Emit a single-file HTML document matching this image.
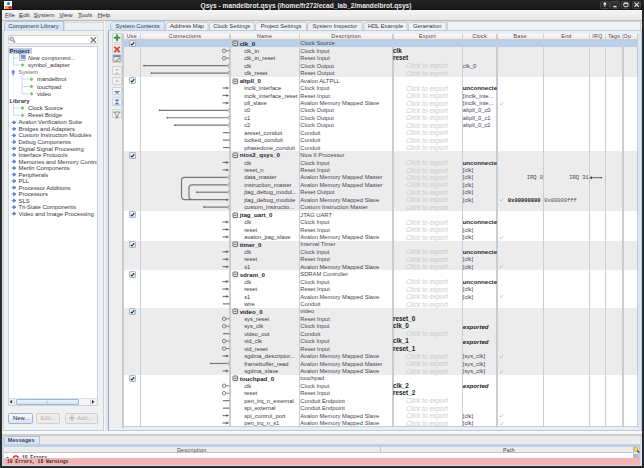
<!DOCTYPE html><html><head><meta charset="utf-8"><style>
*{margin:0;padding:0;box-sizing:border-box}
html,body{width:644px;height:468px;overflow:hidden;background:#2a2a2a}
body{position:relative;font-family:"Liberation Sans",sans-serif;font-size:5.8px;color:#3c3444;line-height:1}
.a{position:absolute}
.t{position:absolute;white-space:nowrap;line-height:1}
.b{font-weight:bold}
.i{font-style:italic}
.m{font-family:"Liberation Mono",monospace;font-size:5.45px}
</style></head><body>
<div class="a" style="left:0;top:0;width:644px;height:9.8px;background:linear-gradient(#242424,#161616)"></div>
<div class="a" style="left:4px;top:1px;width:8px;height:8px;background:#f4f4f4"></div>
<div class="a" style="left:6.5px;top:1.5px;width:3px;height:3px;border-radius:50%;background:#1e6fd0"></div>
<div class="a" style="left:4.5px;top:5.5px;width:3.5px;height:3px;background:#f0a040"></div>
<div class="a" style="left:8px;top:5.5px;width:3.5px;height:3px;border-radius:50%;background:#e02020"></div>
<div class="t b" style="left:200.5px;top:2.6px;font-size:6.63px;color:#e8e8e8">Qsys - mandelbrot.qsys (/home/fr272/ecad_lab_2/mandelbrot.qsys)</div>
<div class="a" style="left:600.2px;top:0.6px;width:9.6px;height:8.4px;background:linear-gradient(#363636,#242424);border:0.6px solid #404040;border-radius:1.5px"></div>
<div class="a" style="left:610.4px;top:0.6px;width:9.6px;height:8.4px;background:linear-gradient(#363636,#242424);border:0.6px solid #404040;border-radius:1.5px"></div>
<div class="a" style="left:620.8px;top:0.6px;width:9.6px;height:8.4px;background:linear-gradient(#363636,#242424);border:0.6px solid #404040;border-radius:1.5px"></div>
<div class="a" style="left:631.5px;top:0.6px;width:9.6px;height:8.4px;background:linear-gradient(#363636,#242424);border:0.6px solid #404040;border-radius:1.5px"></div>
<svg class="a" style="left:0;top:0" width="644" height="10"><g stroke="#e8e8e8" fill="#e8e8e8"><circle cx="604.8" cy="3.8" r="1.35" stroke="none"/><path d="M604.8 4.5 V7" stroke-width="0.8"/><rect x="613.2" y="5.9" width="3.4" height="1.4" stroke="none"/><rect x="623.8" y="2.9" width="4.2" height="3.8" rx="1" fill="none" stroke-width="0.95"/><path d="M624 3.6 H627.8" stroke-width="0.9"/><path d="M634.5 2.7 L638.9 6.9 M638.9 2.7 L634.5 6.9" stroke-width="1.15"/></g></svg>
<div class="a" style="left:2px;top:9.8px;width:640px;height:455.2px;background:#e6e6e6"></div>
<div class="a" style="left:2px;top:9.8px;width:640px;height:10.8px;background:linear-gradient(#f6f6f6,#e6e6e6);border-bottom:1.2px solid #b8bcc2"></div>
<div class="t" style="left:5px;top:12.1px;font-size:6.2px;color:#3a3040"><span style="text-decoration:underline;text-decoration-color:#9a9aa0;text-decoration-thickness:0.45px;text-underline-offset:0.2px">F</span>ile</div>
<div class="t" style="left:19px;top:12.1px;font-size:6.2px;color:#3a3040"><span style="text-decoration:underline;text-decoration-color:#9a9aa0;text-decoration-thickness:0.45px;text-underline-offset:0.2px">E</span>dit</div>
<div class="t" style="left:33.7px;top:12.1px;font-size:6.2px;color:#3a3040"><span style="text-decoration:underline;text-decoration-color:#9a9aa0;text-decoration-thickness:0.45px;text-underline-offset:0.2px">S</span>ystem</div>
<div class="t" style="left:59.2px;top:12.1px;font-size:6.2px;color:#3a3040"><span style="text-decoration:underline;text-decoration-color:#9a9aa0;text-decoration-thickness:0.45px;text-underline-offset:0.2px">V</span>iew</div>
<div class="t" style="left:78px;top:12.1px;font-size:6.2px;color:#3a3040"><span style="text-decoration:underline;text-decoration-color:#9a9aa0;text-decoration-thickness:0.45px;text-underline-offset:0.2px">T</span>ools</div>
<div class="t" style="left:97.5px;top:12.1px;font-size:6.2px;color:#3a3040"><span style="text-decoration:underline;text-decoration-color:#9a9aa0;text-decoration-thickness:0.45px;text-underline-offset:0.2px">H</span>elp</div>
<div class="a" style="left:2px;top:20.5px;width:102px;height:409.5px;background:#e8e8e8"></div>
<div class="a" style="left:63.5px;top:21.5px;width:40px;height:9px;background:#efefef;border:1px solid #d8d8d8;border-bottom:none"></div>
<div class="a" style="left:3px;top:30.3px;width:100.5px;height:400.4px;background:#f0f0f0;border:1px solid #bcd0e6;border-right:1.6px solid #bcd2ec;border-bottom:1.9px solid #b8cce6"></div>
<div class="a" style="left:3.5px;top:21.3px;width:60px;height:9.5px;background:linear-gradient(#e4eefa,#d2e0f2);border:1px solid #b0c6e0;border-bottom:none;border-top-left-radius:3px"></div>
<div class="t" style="left:8.2px;top:23.6px;font-size:5.94px;color:#3a3848">Component Library</div>
<div class="a" style="left:7.5px;top:35.3px;width:90px;height:9.2px;background:#fff;border:1px solid #d4d4d4;border-radius:1px"></div>
<svg class="a" style="left:7px;top:35px" width="92" height="10"><circle cx="4.6" cy="4" r="2" fill="#bcd6f4" stroke="#6f9bd0" stroke-width="0.8"/><line x1="6" y1="5.5" x2="8" y2="7.5" stroke="#d08030" stroke-width="1.4"/><line x1="83.8" y1="2.4" x2="88.8" y2="7.6" stroke="#606060" stroke-width="1.05"/><line x1="88.8" y1="2.4" x2="83.8" y2="7.6" stroke="#606060" stroke-width="1.05"/></svg>
<div class="a" style="left:7.5px;top:46.2px;width:90px;height:359.3px;background:#fff;border:1px solid #c8d4e0"></div>
<div class="a" style="left:8.8px;top:47.6px;width:22.9px;height:6px;background:#bcd0ea"></div>
<svg class="a" style="left:0;top:0" width="104" height="230"><g stroke="#b8cce6" stroke-width="0.7" fill="none"><path d="M13.5 54 V65 M13.5 57.8 H18 M13.5 65 H20"/><path d="M22 75 V93.8 M22 79.2 H29 M22 86.5 H29 M22 93.8 H29"/><path d="M13.5 104 V115.3 M13.5 108 H20 M13.5 115.3 H20"/></g><rect x="19.3" y="54.9" width="6" height="5.6" fill="#e8e8e8" stroke="#a0a0a0" stroke-width="0.6"/><rect x="21" y="54.9" width="4.3" height="4" fill="#6a98e0"/><rect x="21.1" y="63.6" width="2.8" height="2.8" rx="0.6" fill="#70c870" transform="rotate(45 22.5 65.0)"/><ellipse cx="13.2" cy="72.0" rx="1.7" ry="2.1" fill="#6a90d0"/><rect x="12.6" y="73.60000000000001" width="1.2" height="2" fill="#6a90d0"/><rect x="30.1" y="77.8" width="2.8" height="2.8" rx="0.6" fill="#70c870" transform="rotate(45 31.5 79.2)"/><rect x="30.1" y="85.1" width="2.8" height="2.8" rx="0.6" fill="#70c870" transform="rotate(45 31.5 86.5)"/><rect x="30.1" y="92.39999999999999" width="2.8" height="2.8" rx="0.6" fill="#70c870" transform="rotate(45 31.5 93.8)"/><rect x="21.1" y="106.6" width="2.8" height="2.8" rx="0.6" fill="#70c870" transform="rotate(45 22.5 108.0)"/><rect x="21.1" y="113.89999999999999" width="2.8" height="2.8" rx="0.6" fill="#70c870" transform="rotate(45 22.5 115.3)"/><path d="M11.5 122.4 h2.5 M13.5 120.80000000000001 l2.5 1.6 l-2.5 1.6z" stroke="#5b86c8" stroke-width="0.9" fill="#5b86c8"/><path d="M11.5 128.92000000000002 h2.5 M13.5 127.32000000000002 l2.5 1.6 l-2.5 1.6z" stroke="#5b86c8" stroke-width="0.9" fill="#5b86c8"/><path d="M11.5 135.44 h2.5 M13.5 133.84 l2.5 1.6 l-2.5 1.6z" stroke="#5b86c8" stroke-width="0.9" fill="#5b86c8"/><path d="M11.5 141.96 h2.5 M13.5 140.36 l2.5 1.6 l-2.5 1.6z" stroke="#5b86c8" stroke-width="0.9" fill="#5b86c8"/><path d="M11.5 148.48000000000002 h2.5 M13.5 146.88000000000002 l2.5 1.6 l-2.5 1.6z" stroke="#5b86c8" stroke-width="0.9" fill="#5b86c8"/><path d="M11.5 155.0 h2.5 M13.5 153.4 l2.5 1.6 l-2.5 1.6z" stroke="#5b86c8" stroke-width="0.9" fill="#5b86c8"/><path d="M11.5 161.52 h2.5 M13.5 159.92000000000002 l2.5 1.6 l-2.5 1.6z" stroke="#5b86c8" stroke-width="0.9" fill="#5b86c8"/><path d="M11.5 168.04000000000002 h2.5 M13.5 166.44000000000003 l2.5 1.6 l-2.5 1.6z" stroke="#5b86c8" stroke-width="0.9" fill="#5b86c8"/><path d="M11.5 174.56 h2.5 M13.5 172.96 l2.5 1.6 l-2.5 1.6z" stroke="#5b86c8" stroke-width="0.9" fill="#5b86c8"/><path d="M11.5 181.07999999999998 h2.5 M13.5 179.48 l2.5 1.6 l-2.5 1.6z" stroke="#5b86c8" stroke-width="0.9" fill="#5b86c8"/><path d="M11.5 187.6 h2.5 M13.5 186.0 l2.5 1.6 l-2.5 1.6z" stroke="#5b86c8" stroke-width="0.9" fill="#5b86c8"/><path d="M11.5 194.12 h2.5 M13.5 192.52 l2.5 1.6 l-2.5 1.6z" stroke="#5b86c8" stroke-width="0.9" fill="#5b86c8"/><path d="M11.5 200.64 h2.5 M13.5 199.04 l2.5 1.6 l-2.5 1.6z" stroke="#5b86c8" stroke-width="0.9" fill="#5b86c8"/><path d="M11.5 207.16 h2.5 M13.5 205.56 l2.5 1.6 l-2.5 1.6z" stroke="#5b86c8" stroke-width="0.9" fill="#5b86c8"/><path d="M11.5 213.68 h2.5 M13.5 212.08 l2.5 1.6 l-2.5 1.6z" stroke="#5b86c8" stroke-width="0.9" fill="#5b86c8"/></svg>
<div class="a" style="left:0;top:0;width:96.5px;height:400px;overflow:hidden">
<div class="t b" style="left:9.5px;top:48.75px;color:#2a2a44;font-size:5.9px">Project</div>
<div class="t i" style="left:28px;top:55.849999999999994px;color:#3a3a44;font-size:5.9px">New component...</div>
<div class="t " style="left:28px;top:63.05px;color:#3a3040;font-size:5.9px">symbol_adapter</div>
<div class="t " style="left:18.5px;top:70.45px;color:#707070;font-size:5.9px">System</div>
<div class="t " style="left:37px;top:77.25px;color:#3a3040;font-size:5.9px">mandelbrot</div>
<div class="t " style="left:37px;top:84.55px;color:#3a3040;font-size:5.9px">touchpad</div>
<div class="t " style="left:37px;top:91.85px;color:#3a3040;font-size:5.9px">video</div>
<div class="t b" style="left:9.5px;top:98.85px;color:#3a3040;font-size:5.9px">Library</div>
<div class="t " style="left:28px;top:106.05px;color:#3a3040;font-size:5.9px">Clock Source</div>
<div class="t " style="left:28px;top:113.35px;color:#3a3040;font-size:5.9px">Reset Bridge</div>
<div class="t " style="left:18.5px;top:120.45px;color:#3a3444;font-size:5.9px">Avalon Verification Suite</div>
<div class="t " style="left:18.5px;top:126.97000000000001px;color:#3a3444;font-size:5.9px">Bridges and Adapters</div>
<div class="t " style="left:18.5px;top:133.49px;color:#3a3444;font-size:5.9px">Custom Instruction Modules</div>
<div class="t " style="left:18.5px;top:140.01000000000002px;color:#3a3444;font-size:5.9px">Debug Components</div>
<div class="t " style="left:18.5px;top:146.53000000000003px;color:#3a3444;font-size:5.9px">Digital Signal Processing</div>
<div class="t " style="left:18.5px;top:153.05px;color:#3a3444;font-size:5.9px">Interface Protocols</div>
<div class="t " style="left:18.5px;top:159.57000000000002px;color:#3a3444;font-size:5.9px">Memories and Memory Controllers</div>
<div class="t " style="left:18.5px;top:166.09000000000003px;color:#3a3444;font-size:5.9px">Merlin Components</div>
<div class="t " style="left:18.5px;top:172.61px;color:#3a3444;font-size:5.9px">Peripherals</div>
<div class="t " style="left:18.5px;top:179.13px;color:#3a3444;font-size:5.9px">PLL</div>
<div class="t " style="left:18.5px;top:185.65px;color:#3a3444;font-size:5.9px">Processor Additions</div>
<div class="t " style="left:18.5px;top:192.17000000000002px;color:#3a3444;font-size:5.9px">Processors</div>
<div class="t " style="left:18.5px;top:198.69px;color:#3a3444;font-size:5.9px">SLS</div>
<div class="t " style="left:18.5px;top:205.21px;color:#3a3444;font-size:5.9px">Tri-State Components</div>
<div class="t " style="left:18.5px;top:211.73000000000002px;color:#3a3444;font-size:5.9px">Video and Image Processing</div>
</div>
<div class="a" style="left:7.5px;top:398px;width:90px;height:7.6px;background:#f6f6f6;border:1px solid #c8d4e0;border-top:1px solid #d8e0e8"></div>
<div class="a" style="left:8.5px;top:399px;width:6px;height:5.6px;background:#f2f2f2;border-right:1px solid #d4d4d4"></div>
<div class="a" style="left:90px;top:399px;width:6.5px;height:5.6px;background:#f2f2f2;border-left:1px solid #d4d4d4"></div>
<div class="a" style="left:15.5px;top:398.8px;width:63.5px;height:6px;background:linear-gradient(#eef4fc,#d4e2f4);border:1px solid #a0b8d8;border-radius:1px"></div>
<svg class="a" style="left:0;top:396px" width="104" height="12"><path d="M9.8 5.8 l2.3 -1.9 v3.8z" fill="#202020"/><path d="M94.3 5.8 l-2.3 -1.9 v3.8z" fill="#202020"/><line x1="47" y1="4.5" x2="47" y2="7.5" stroke="#8098c0" stroke-width="0.6"/></svg>
<div class="a" style="left:7.7px;top:413.4px;width:25.8px;height:10.4px;background:linear-gradient(#f6f9fd,#d8e4f2);border:1px solid #9cb4d4;border-radius:1.5px"></div>
<div class="t" style="left:13px;top:416px;color:#202038;font-size:5.8px">New...</div>
<div class="a" style="left:36px;top:413.4px;width:24px;height:10.4px;background:#ececec;border:1px solid #d0d0d0;border-radius:1.5px"></div>
<div class="t" style="left:40.5px;top:416px;color:#b0b0b0;font-size:5.8px">Edit...</div>
<div class="a" style="left:64.5px;top:412.8px;width:33.5px;height:11px;background:#ececec;border:1px solid #d0d0d0;border-radius:1.5px"></div>
<svg class="a" style="left:68px;top:414px" width="8" height="8"><path d="M4 1 v6 M1 4 h6" stroke="#b0b0b0" stroke-width="1.2"/></svg>
<div class="t" style="left:77px;top:416px;color:#b0b0b0;font-size:5.8px">Add...</div>
<div class="a" style="left:103.5px;top:20.5px;width:4px;height:409.5px;background:#e8e8e8;border-left:1px solid #f6f6f6"></div>
<div class="a" style="left:107.5px;top:20.5px;width:534.5px;height:409.5px;background:#e8e8e8"></div>
<div class="a" style="left:107.5px;top:30.4px;width:534px;height:400.3px;background:#eeeeee;border:1px solid #b8cce6;border-left:1.6px solid #90a8cc;border-bottom:1.9px solid #b8cce6"></div>
<svg class="a" style="left:0;top:0" width="644" height="32"><defs><linearGradient id="tg" x1="0" y1="0" x2="0" y2="1"><stop offset="0" stop-color="#e4eefa"/><stop offset="1" stop-color="#d0def0"/></linearGradient></defs><path d="M110.5 30.6 V24.4 L113.3 21.6 H164.5 V30.6" fill="url(#tg)" stroke="#b0c6e0" stroke-width="0.9"/><path d="M166.0 30.2 V24.6 L168.4 22.2 H208.0 V30.2" fill="#f2f2f2" stroke="#c4c4c4" stroke-width="0.9"/><path d="M209.5 30.2 V24.6 L211.9 22.2 H254.0 V30.2" fill="#f2f2f2" stroke="#c4c4c4" stroke-width="0.9"/><path d="M255.5 30.2 V24.6 L257.9 22.2 H306.5 V30.2" fill="#f2f2f2" stroke="#c4c4c4" stroke-width="0.9"/><path d="M307.8 30.2 V24.6 L310.2 22.2 H362.0 V30.2" fill="#f2f2f2" stroke="#c4c4c4" stroke-width="0.9"/><path d="M364.0 30.2 V24.6 L366.4 22.2 H407.0 V30.2" fill="#f2f2f2" stroke="#c4c4c4" stroke-width="0.9"/><path d="M408.5 30.2 V24.6 L410.9 22.2 H446.0 V30.2" fill="#f2f2f2" stroke="#c4c4c4" stroke-width="0.9"/></svg>
<div class="t" style="left:110px;top:23.6px;font-size:5.8px;color:#3a3444;width:55px;text-align:center">System Contents</div>
<div class="t" style="left:165.5px;top:23.6px;font-size:5.8px;color:#3a3444;width:43.0px;text-align:center">Address Map</div>
<div class="t" style="left:209px;top:23.6px;font-size:5.8px;color:#3a3444;width:45.5px;text-align:center">Clock Settings</div>
<div class="t" style="left:255px;top:23.6px;font-size:5.8px;color:#3a3444;width:52px;text-align:center">Project Settings</div>
<div class="t" style="left:307.3px;top:23.6px;font-size:5.8px;color:#3a3444;width:55.19999999999999px;text-align:center">System Inspector</div>
<div class="t" style="left:363.5px;top:23.6px;font-size:5.8px;color:#3a3444;width:44.0px;text-align:center">HDL Example</div>
<div class="t" style="left:408px;top:23.6px;font-size:5.8px;color:#3a3444;width:38.5px;text-align:center">Generation</div>
<div class="a" style="left:447px;top:21.2px;width:194px;height:9px;background:#f2f2f2;border:1px solid #d4d4d4;border-bottom:none"></div>
<div class="a" style="left:107.5px;top:29.7px;width:534.5px;height:1.5px;background:#b8cce8"></div>
<div class="a" style="left:112px;top:33px;width:10px;height:9.5px;background:#f4f4f4;border:1px solid #d0d0d0;border-radius:1px"></div>
<div class="a" style="left:112px;top:44px;width:10px;height:8.600000000000001px;background:#f4f4f4;border:1px solid #d0d0d0;border-radius:1px"></div>
<div class="a" style="left:112px;top:54px;width:10px;height:8.700000000000003px;background:#f4f4f4;border:1px solid #d0d0d0;border-radius:1px"></div>
<div class="a" style="left:112px;top:66.3px;width:10px;height:8.700000000000003px;background:#f4f4f4;border:1px solid #d0d0d0;border-radius:1px"></div>
<div class="a" style="left:112px;top:76.9px;width:10px;height:8.599999999999994px;background:#f4f4f4;border:1px solid #d0d0d0;border-radius:1px"></div>
<div class="a" style="left:112px;top:86.8px;width:10px;height:8.700000000000003px;background:#f4f4f4;border:1px solid #d0d0d0;border-radius:1px"></div>
<div class="a" style="left:112px;top:97.3px;width:10px;height:8.700000000000003px;background:#f4f4f4;border:1px solid #d0d0d0;border-radius:1px"></div>
<div class="a" style="left:112px;top:109px;width:10px;height:9.400000000000006px;background:#f4f4f4;border:1px solid #d0d0d0;border-radius:1px"></div>
<svg class="a" style="left:112px;top:32px" width="10" height="90"><path d="M5 2.5 v6.5 M1.8 5.75 h6.5" stroke="#3aa040" stroke-width="2.2"/><path d="M2.3 14.6 l5.4 5.4 M7.7 14.6 l-5.4 5.4" stroke="#e84040" stroke-width="1.8"/><rect x="1.8" y="23.6" width="6.4" height="6" fill="#e4ecf8" stroke="#5a88c8" stroke-width="0.7"/><rect x="1.8" y="23.6" width="6.4" height="1.4" fill="#5a88c8"/><path d="M3.6 29.6 l4.6 -4.4" stroke="#e0a020" stroke-width="1.5"/><path d="M2.5 37 h5 l-2.5 2z M2.5 42 h5 l-2.5 -2z" fill="#c4c4c4"/><path d="M2.5 50 h5 l-2.5 -2.8z" fill="#c8c8c8"/><path d="M2 59 h6 l-3 3z" fill="#4a86e0"/><path d="M2.3 67.5 h5.4 l-2.7 2.4z M2.3 72.5 h5.4 l-2.7 -2.4z" fill="#3f80e0"/><path d="M1.8 80 h6.4 l-2.4 3 v3 h-1.6 v-3z" fill="none" stroke="#707070" stroke-width="0.8"/></svg>
<div class="a" style="left:637.5px;top:33.5px;width:3.2px;height:395px;background:#dce6f2"></div>
<div class="a" style="left:123.5px;top:33.5px;width:513.9px;height:393.24px;background:#fff"></div>
<div class="a" style="left:123.5px;top:33.5px;width:513.9px;height:6.1px;background:linear-gradient(#f8f8f8,#ececec);border-bottom:1px solid #c8ccd2"></div>
<div class="t" style="left:123.5px;top:34.3px;width:16.80000000000001px;text-align:center;font-size:5.3px;letter-spacing:0.28px;color:#4a3a48">Use</div>
<div class="t" style="left:140.3px;top:34.3px;width:89.5px;text-align:center;font-size:5.3px;letter-spacing:0.28px;color:#4a3a48">Connections</div>
<div class="t" style="left:229.8px;top:34.3px;width:69.69999999999999px;text-align:center;font-size:5.3px;letter-spacing:0.28px;color:#4a3a48">Name</div>
<div class="t" style="left:299.5px;top:34.3px;width:93.19999999999999px;text-align:center;font-size:5.3px;letter-spacing:0.28px;color:#4a3a48">Description</div>
<div class="t" style="left:392.7px;top:34.3px;width:69.60000000000002px;text-align:center;font-size:5.3px;letter-spacing:0.28px;color:#4a3a48">Export</div>
<div class="t" style="left:462.3px;top:34.3px;width:34.69999999999999px;text-align:center;font-size:5.3px;letter-spacing:0.28px;color:#4a3a48">Clock</div>
<div class="t" style="left:497.0px;top:34.3px;width:46.299999999999955px;text-align:center;font-size:5.3px;letter-spacing:0.28px;color:#4a3a48">Base</div>
<div class="t" style="left:543.3px;top:34.3px;width:46.200000000000045px;text-align:center;font-size:5.3px;letter-spacing:0.28px;color:#4a3a48">End</div>
<div class="t" style="left:589.5px;top:34.3px;width:15.899999999999977px;text-align:center;font-size:5.3px;letter-spacing:0.28px;color:#4a3a48">IRQ</div>
<div class="t" style="left:605.4px;top:34.3px;width:17.300000000000068px;text-align:center;font-size:5.3px;letter-spacing:0.28px;color:#4a3a48">Tags</div>
<div class="t" style="left:622.7px;top:34.3px;width:14.699999999999932px;text-align:center;font-size:5.3px;letter-spacing:0.28px;color:#4a3a48">Op<span style="color:#d4d4d4">...</span></div>
<div class="a" style="left:124.0px;top:39.6px;width:513.4px;height:7.465px;background:#b9cfe7"></div>
<div class="a" style="left:124.0px;top:47.045px;width:513.4px;height:7.465px;background:#ececec"></div>
<div class="a" style="left:124.0px;top:54.49px;width:513.4px;height:7.465px;background:#ececec"></div>
<div class="a" style="left:124.0px;top:61.935px;width:513.4px;height:7.465px;background:#ececec"></div>
<div class="a" style="left:124.0px;top:69.38px;width:513.4px;height:7.465px;background:#ececec"></div>
<div class="a" style="left:124.0px;top:151.275px;width:513.4px;height:7.465px;background:#ececec"></div>
<div class="a" style="left:124.0px;top:158.72px;width:513.4px;height:7.465px;background:#ececec"></div>
<div class="a" style="left:124.0px;top:166.165px;width:513.4px;height:7.465px;background:#ececec"></div>
<div class="a" style="left:124.0px;top:173.60999999999999px;width:513.4px;height:7.465px;background:#ececec"></div>
<div class="a" style="left:124.0px;top:181.055px;width:513.4px;height:7.465px;background:#ececec"></div>
<div class="a" style="left:124.0px;top:188.5px;width:513.4px;height:7.465px;background:#ececec"></div>
<div class="a" style="left:124.0px;top:195.945px;width:513.4px;height:7.465px;background:#ececec"></div>
<div class="a" style="left:124.0px;top:203.39000000000001px;width:513.4px;height:7.465px;background:#ececec"></div>
<div class="a" style="left:124.0px;top:240.615px;width:513.4px;height:7.465px;background:#ececec"></div>
<div class="a" style="left:124.0px;top:248.06px;width:513.4px;height:7.465px;background:#ececec"></div>
<div class="a" style="left:124.0px;top:255.505px;width:513.4px;height:7.465px;background:#ececec"></div>
<div class="a" style="left:124.0px;top:262.95000000000005px;width:513.4px;height:7.465px;background:#ececec"></div>
<div class="a" style="left:124.0px;top:307.62px;width:513.4px;height:7.465px;background:#ececec"></div>
<div class="a" style="left:124.0px;top:315.06500000000005px;width:513.4px;height:7.465px;background:#ececec"></div>
<div class="a" style="left:124.0px;top:322.51000000000005px;width:513.4px;height:7.465px;background:#ececec"></div>
<div class="a" style="left:124.0px;top:329.95500000000004px;width:513.4px;height:7.465px;background:#ececec"></div>
<div class="a" style="left:124.0px;top:337.40000000000003px;width:513.4px;height:7.465px;background:#ececec"></div>
<div class="a" style="left:124.0px;top:344.845px;width:513.4px;height:7.465px;background:#ececec"></div>
<div class="a" style="left:124.0px;top:352.29px;width:513.4px;height:7.465px;background:#ececec"></div>
<div class="a" style="left:124.0px;top:359.735px;width:513.4px;height:7.465px;background:#ececec"></div>
<div class="a" style="left:124.0px;top:367.18000000000006px;width:513.4px;height:7.465px;background:#ececec"></div>
<div class="a" style="left:139.70000000000002px;top:33.5px;width:1.5px;height:393.24px;background:#c6ced8"></div>
<div class="a" style="left:229.20000000000002px;top:33.5px;width:1.5px;height:393.24px;background:#c6ced8"></div>
<div class="a" style="left:298.9px;top:33.5px;width:1.5px;height:393.24px;background:#c6ced8"></div>
<div class="a" style="left:392.09999999999997px;top:33.5px;width:1.5px;height:393.24px;background:#c6ced8"></div>
<div class="a" style="left:461.7px;top:33.5px;width:1.5px;height:393.24px;background:#c6ced8"></div>
<div class="a" style="left:496.4px;top:33.5px;width:1.5px;height:393.24px;background:#c6ced8"></div>
<div class="a" style="left:542.6999999999999px;top:33.5px;width:1.5px;height:393.24px;background:#c6ced8"></div>
<div class="a" style="left:588.9px;top:33.5px;width:1.5px;height:393.24px;background:#c6ced8"></div>
<div class="a" style="left:604.8px;top:33.5px;width:1.5px;height:393.24px;background:#c6ced8"></div>
<div class="a" style="left:622.1px;top:33.5px;width:1.5px;height:393.24px;background:#c6ced8"></div>
<div class="a" style="left:636.9px;top:33.5px;width:1px;height:393.24px;background:#c4ccd6"></div>
<div class="a" style="left:122.2px;top:33.5px;width:1.8px;height:394.24px;background:#c4ccd6"></div>
<div class="a" style="left:123.5px;top:426.24px;width:513.9px;height:1px;background:#c4ccd6"></div>
<svg class="a" style="left:128.8px;top:40.1px" width="7" height="7"><defs><linearGradient id="cb0" x1="0" y1="0" x2="1" y2="1"><stop offset="0" stop-color="#d4e2f2"/><stop offset="0.5" stop-color="#f8fbff"/><stop offset="1" stop-color="#c4d6ec"/></linearGradient></defs><rect x="0.5" y="0.5" width="6" height="6" rx="0.8" fill="url(#cb0)" stroke="#90a6c2" stroke-width="0.8"/><path d="M1.8 3.8 L2.9 5 L5.2 2.1" stroke="#1a1a1a" stroke-width="1.1" fill="none"/></svg>
<svg class="a" style="left:231.5px;top:40.300000000000004px" width="7" height="7"><rect x="1" y="1" width="4.6" height="4.6" rx="0.6" fill="#f0f0f0" stroke="#585858" stroke-width="0.9"/><path d="M2.2 3.3 H4.4" stroke="#303030" stroke-width="0.8"/></svg>
<div class="t b" style="left:239.7px;top:40.8px;color:#241c2c;font-size:6.15px">clk_0</div>
<div class="t " style="left:300.3px;top:41.4px;color:#4a4250;">Clock Source</div>
<div class="t " style="left:244.2px;top:48.845px;color:#3e3646;">clk_in</div>
<div class="t " style="left:300.3px;top:48.845px;color:#4a4250;">Clock Input</div>
<div class="t b" style="left:393.0px;top:47.945px;color:#181818;font-size:6.35px">clk</div>
<div class="t " style="left:244.2px;top:56.29px;color:#3e3646;">clk_in_reset</div>
<div class="t " style="left:300.3px;top:56.29px;color:#4a4250;">Reset Input</div>
<div class="t b" style="left:393.0px;top:55.39px;color:#181818;font-size:6.35px">reset</div>
<div class="t " style="left:244.2px;top:63.735px;color:#3e3646;">clk</div>
<div class="t " style="left:300.3px;top:63.735px;color:#4a4250;">Clock Output</div>
<div class="t i" style="left:392.2px;top:63.335px;width:69.3px;text-align:center;color:#cbcbcb;font-size:6.6px">Click to export</div>
<div class="t " style="left:462.8px;top:63.735px;color:#4a3e56;">clk_0</div>
<div class="t " style="left:244.2px;top:71.17999999999999px;color:#3e3646;">clk_reset</div>
<div class="t " style="left:300.3px;top:71.17999999999999px;color:#4a4250;">Reset Output</div>
<div class="t i" style="left:392.2px;top:70.77999999999999px;width:69.3px;text-align:center;color:#cbcbcb;font-size:6.6px">Click to export</div>
<svg class="a" style="left:128.8px;top:77.325px" width="7" height="7"><defs><linearGradient id="cb5" x1="0" y1="0" x2="1" y2="1"><stop offset="0" stop-color="#d4e2f2"/><stop offset="0.5" stop-color="#f8fbff"/><stop offset="1" stop-color="#c4d6ec"/></linearGradient></defs><rect x="0.5" y="0.5" width="6" height="6" rx="0.8" fill="url(#cb5)" stroke="#90a6c2" stroke-width="0.8"/><path d="M1.8 3.8 L2.9 5 L5.2 2.1" stroke="#1a1a1a" stroke-width="1.1" fill="none"/></svg>
<svg class="a" style="left:231.5px;top:77.525px" width="7" height="7"><rect x="1" y="1" width="4.6" height="4.6" rx="0.6" fill="#f0f0f0" stroke="#585858" stroke-width="0.9"/><path d="M2.2 3.3 H4.4" stroke="#303030" stroke-width="0.8"/></svg>
<div class="t b" style="left:239.7px;top:78.025px;color:#241c2c;font-size:6.15px">altpll_0</div>
<div class="t " style="left:300.3px;top:78.625px;color:#4a4250;">Avalon ALTPLL</div>
<div class="t " style="left:244.2px;top:86.07000000000001px;color:#3e3646;">inclk_interface</div>
<div class="t " style="left:300.3px;top:86.07000000000001px;color:#4a4250;">Clock Input</div>
<div class="t i" style="left:392.2px;top:85.67px;width:69.3px;text-align:center;color:#cbcbcb;font-size:6.6px">Click to export</div>
<div class="t b" style="left:462.6px;top:85.37px;width:34px;overflow:hidden;color:#282828;font-size:6.15px">unconnected</div>
<div class="t " style="left:244.2px;top:93.515px;color:#3e3646;">inclk_interface_reset</div>
<div class="t " style="left:300.3px;top:93.515px;color:#4a4250;">Reset Input</div>
<div class="t i" style="left:392.2px;top:93.115px;width:69.3px;text-align:center;color:#cbcbcb;font-size:6.6px">Click to export</div>
<div class="t " style="left:462.8px;top:93.515px;color:#4a3e56;">[inclk_inte...</div>
<div class="t " style="left:244.2px;top:100.96px;color:#3e3646;">pll_slave</div>
<div class="t " style="left:300.3px;top:100.96px;color:#4a4250;">Avalon Memory Mapped Slave</div>
<div class="t i" style="left:392.2px;top:100.55999999999999px;width:69.3px;text-align:center;color:#cbcbcb;font-size:6.6px">Click to export</div>
<div class="t " style="left:462.8px;top:100.96px;color:#4a3e56;">[inclk_inte...</div>
<svg class="a" style="left:498.5px;top:100.66px" width="5" height="5"><path d="M0.8 2.8 l1 1.2 l2.2 -2.8" stroke="#a0a0a0" stroke-width="0.6" fill="none"/></svg>
<div class="t " style="left:244.2px;top:108.40499999999999px;color:#3e3646;">c0</div>
<div class="t " style="left:300.3px;top:108.40499999999999px;color:#4a4250;">Clock Output</div>
<div class="t i" style="left:392.2px;top:108.00499999999998px;width:69.3px;text-align:center;color:#cbcbcb;font-size:6.6px">Click to export</div>
<div class="t " style="left:462.8px;top:108.40499999999999px;color:#4a3e56;">altpll_0_c0</div>
<div class="t " style="left:244.2px;top:115.85000000000001px;color:#3e3646;">c1</div>
<div class="t " style="left:300.3px;top:115.85000000000001px;color:#4a4250;">Clock Output</div>
<div class="t i" style="left:392.2px;top:115.45px;width:69.3px;text-align:center;color:#cbcbcb;font-size:6.6px">Click to export</div>
<div class="t " style="left:462.8px;top:115.85000000000001px;color:#4a3e56;">altpll_0_c1</div>
<div class="t " style="left:244.2px;top:123.295px;color:#3e3646;">c2</div>
<div class="t " style="left:300.3px;top:123.295px;color:#4a4250;">Clock Output</div>
<div class="t i" style="left:392.2px;top:122.895px;width:69.3px;text-align:center;color:#cbcbcb;font-size:6.6px">Click to export</div>
<div class="t " style="left:462.8px;top:123.295px;color:#4a3e56;">altpll_0_c2</div>
<div class="t " style="left:244.2px;top:130.74px;color:#3e3646;">areset_conduit</div>
<div class="t " style="left:300.3px;top:130.74px;color:#4a4250;">Conduit</div>
<div class="t i" style="left:392.2px;top:130.34px;width:69.3px;text-align:center;color:#cbcbcb;font-size:6.6px">Click to export</div>
<div class="t " style="left:244.2px;top:138.185px;color:#3e3646;">locked_conduit</div>
<div class="t " style="left:300.3px;top:138.185px;color:#4a4250;">Conduit</div>
<div class="t i" style="left:392.2px;top:137.785px;width:69.3px;text-align:center;color:#cbcbcb;font-size:6.6px">Click to export</div>
<div class="t " style="left:244.2px;top:145.63000000000002px;color:#3e3646;">phasedone_conduit</div>
<div class="t " style="left:300.3px;top:145.63000000000002px;color:#4a4250;">Conduit</div>
<div class="t i" style="left:392.2px;top:145.23000000000002px;width:69.3px;text-align:center;color:#cbcbcb;font-size:6.6px">Click to export</div>
<svg class="a" style="left:128.8px;top:151.775px" width="7" height="7"><defs><linearGradient id="cb15" x1="0" y1="0" x2="1" y2="1"><stop offset="0" stop-color="#d4e2f2"/><stop offset="0.5" stop-color="#f8fbff"/><stop offset="1" stop-color="#c4d6ec"/></linearGradient></defs><rect x="0.5" y="0.5" width="6" height="6" rx="0.8" fill="url(#cb15)" stroke="#90a6c2" stroke-width="0.8"/><path d="M1.8 3.8 L2.9 5 L5.2 2.1" stroke="#1a1a1a" stroke-width="1.1" fill="none"/></svg>
<svg class="a" style="left:231.5px;top:151.975px" width="7" height="7"><rect x="1" y="1" width="4.6" height="4.6" rx="0.6" fill="#f0f0f0" stroke="#585858" stroke-width="0.9"/><path d="M2.2 3.3 H4.4" stroke="#303030" stroke-width="0.8"/></svg>
<div class="t b" style="left:239.7px;top:152.47500000000002px;color:#241c2c;font-size:6.15px">nios2_qsys_0</div>
<div class="t " style="left:300.3px;top:153.07500000000002px;color:#4a4250;">Nios II Processor</div>
<div class="t " style="left:244.2px;top:160.52px;color:#3e3646;">clk</div>
<div class="t " style="left:300.3px;top:160.52px;color:#4a4250;">Clock Input</div>
<div class="t i" style="left:392.2px;top:160.12px;width:69.3px;text-align:center;color:#cbcbcb;font-size:6.6px">Click to export</div>
<div class="t b" style="left:462.6px;top:159.82000000000002px;width:34px;overflow:hidden;color:#282828;font-size:6.15px">unconnected</div>
<div class="t " style="left:244.2px;top:167.965px;color:#3e3646;">reset_n</div>
<div class="t " style="left:300.3px;top:167.965px;color:#4a4250;">Reset Input</div>
<div class="t i" style="left:392.2px;top:167.565px;width:69.3px;text-align:center;color:#cbcbcb;font-size:6.6px">Click to export</div>
<div class="t " style="left:462.8px;top:167.965px;color:#4a3e56;">[clk]</div>
<div class="t " style="left:244.2px;top:175.41px;color:#3e3646;">data_master</div>
<div class="t " style="left:300.3px;top:175.41px;color:#4a4250;">Avalon Memory Mapped Master</div>
<div class="t i" style="left:392.2px;top:175.01px;width:69.3px;text-align:center;color:#cbcbcb;font-size:6.6px">Click to export</div>
<div class="t " style="left:462.8px;top:175.41px;color:#4a3e56;">[clk]</div>
<div class="t m" style="left:500px;top:175.41px;width:43px;text-align:right;color:#4a4a4a">IRQ 0</div>
<div class="t m" style="left:544px;top:175.41px;width:44.8px;text-align:right;color:#4a4a4a">IRQ 31</div>
<svg class="a" style="left:588px;top:173.60999999999999px" width="16" height="7"><path d="M2 3.7 H13.5" stroke="#404040" stroke-width="0.8"/><path d="M1.5 3.7 l2.5 -1.5 v3z" fill="#404040"/><circle cx="13.5" cy="3.7" r="0.7" fill="#404040"/></svg>
<div class="t " style="left:244.2px;top:182.85500000000002px;color:#3e3646;">instruction_master</div>
<div class="t " style="left:300.3px;top:182.85500000000002px;color:#4a4250;">Avalon Memory Mapped Master</div>
<div class="t i" style="left:392.2px;top:182.455px;width:69.3px;text-align:center;color:#cbcbcb;font-size:6.6px">Click to export</div>
<div class="t " style="left:462.8px;top:182.85500000000002px;color:#4a3e56;">[clk]</div>
<div class="t " style="left:244.2px;top:190.3px;color:#3e3646;">jtag_debug_modul...</div>
<div class="t " style="left:300.3px;top:190.3px;color:#4a4250;">Reset Output</div>
<div class="t i" style="left:392.2px;top:189.9px;width:69.3px;text-align:center;color:#cbcbcb;font-size:6.6px">Click to export</div>
<div class="t " style="left:462.8px;top:190.3px;color:#4a3e56;">[clk]</div>
<div class="t " style="left:244.2px;top:197.745px;color:#3e3646;">jtag_debug_module</div>
<div class="t " style="left:300.3px;top:197.745px;color:#4a4250;">Avalon Memory Mapped Slave</div>
<div class="t i" style="left:392.2px;top:197.345px;width:69.3px;text-align:center;color:#cbcbcb;font-size:6.6px">Click to export</div>
<div class="t " style="left:462.8px;top:197.745px;color:#4a3e56;">[clk]</div>
<svg class="a" style="left:498.5px;top:197.445px" width="5" height="5"><path d="M0.8 2.8 l1 1.2 l2.2 -2.8" stroke="#a0a0a0" stroke-width="0.6" fill="none"/></svg>
<div class="t b m" style="left:500px;top:197.745px;width:40.5px;text-align:right;color:#202020">0x00000000</div>
<div class="t m" style="left:544.2px;top:197.745px;color:#4a4a4a;">0x00000fff</div>
<div class="t " style="left:244.2px;top:205.19000000000003px;color:#3e3646;">custom_instructio...</div>
<div class="t " style="left:300.3px;top:205.19000000000003px;color:#4a4250;">Custom Instruction Master</div>
<div class="t i" style="left:392.2px;top:204.79000000000002px;width:69.3px;text-align:center;color:#cbcbcb;font-size:6.6px">Click to export</div>
<svg class="a" style="left:128.8px;top:211.335px" width="7" height="7"><defs><linearGradient id="cb23" x1="0" y1="0" x2="1" y2="1"><stop offset="0" stop-color="#d4e2f2"/><stop offset="0.5" stop-color="#f8fbff"/><stop offset="1" stop-color="#c4d6ec"/></linearGradient></defs><rect x="0.5" y="0.5" width="6" height="6" rx="0.8" fill="url(#cb23)" stroke="#90a6c2" stroke-width="0.8"/><path d="M1.8 3.8 L2.9 5 L5.2 2.1" stroke="#1a1a1a" stroke-width="1.1" fill="none"/></svg>
<svg class="a" style="left:231.5px;top:211.535px" width="7" height="7"><rect x="1" y="1" width="4.6" height="4.6" rx="0.6" fill="#f0f0f0" stroke="#585858" stroke-width="0.9"/><path d="M2.2 3.3 H4.4" stroke="#303030" stroke-width="0.8"/></svg>
<div class="t b" style="left:239.7px;top:212.03500000000003px;color:#241c2c;font-size:6.15px">jtag_uart_0</div>
<div class="t " style="left:300.3px;top:212.63500000000002px;color:#4a4250;">JTAG UART</div>
<div class="t " style="left:244.2px;top:220.08px;color:#3e3646;">clk</div>
<div class="t " style="left:300.3px;top:220.08px;color:#4a4250;">Clock Input</div>
<div class="t i" style="left:392.2px;top:219.68px;width:69.3px;text-align:center;color:#cbcbcb;font-size:6.6px">Click to export</div>
<div class="t b" style="left:462.6px;top:219.38000000000002px;width:34px;overflow:hidden;color:#282828;font-size:6.15px">unconnected</div>
<div class="t " style="left:244.2px;top:227.525px;color:#3e3646;">reset</div>
<div class="t " style="left:300.3px;top:227.525px;color:#4a4250;">Reset Input</div>
<div class="t i" style="left:392.2px;top:227.125px;width:69.3px;text-align:center;color:#cbcbcb;font-size:6.6px">Click to export</div>
<div class="t " style="left:462.8px;top:227.525px;color:#4a3e56;">[clk]</div>
<div class="t " style="left:244.2px;top:234.97px;color:#3e3646;">avalon_jtag_slave</div>
<div class="t " style="left:300.3px;top:234.97px;color:#4a4250;">Avalon Memory Mapped Slave</div>
<div class="t i" style="left:392.2px;top:234.57px;width:69.3px;text-align:center;color:#cbcbcb;font-size:6.6px">Click to export</div>
<div class="t " style="left:462.8px;top:234.97px;color:#4a3e56;">[clk]</div>
<svg class="a" style="left:498.5px;top:234.67px" width="5" height="5"><path d="M0.8 2.8 l1 1.2 l2.2 -2.8" stroke="#a0a0a0" stroke-width="0.6" fill="none"/></svg>
<svg class="a" style="left:128.8px;top:241.115px" width="7" height="7"><defs><linearGradient id="cb27" x1="0" y1="0" x2="1" y2="1"><stop offset="0" stop-color="#d4e2f2"/><stop offset="0.5" stop-color="#f8fbff"/><stop offset="1" stop-color="#c4d6ec"/></linearGradient></defs><rect x="0.5" y="0.5" width="6" height="6" rx="0.8" fill="url(#cb27)" stroke="#90a6c2" stroke-width="0.8"/><path d="M1.8 3.8 L2.9 5 L5.2 2.1" stroke="#1a1a1a" stroke-width="1.1" fill="none"/></svg>
<svg class="a" style="left:231.5px;top:241.315px" width="7" height="7"><rect x="1" y="1" width="4.6" height="4.6" rx="0.6" fill="#f0f0f0" stroke="#585858" stroke-width="0.9"/><path d="M2.2 3.3 H4.4" stroke="#303030" stroke-width="0.8"/></svg>
<div class="t b" style="left:239.7px;top:241.81500000000003px;color:#241c2c;font-size:6.15px">timer_0</div>
<div class="t " style="left:300.3px;top:242.41500000000002px;color:#4a4250;">Interval Timer</div>
<div class="t " style="left:244.2px;top:249.86px;color:#3e3646;">clk</div>
<div class="t " style="left:300.3px;top:249.86px;color:#4a4250;">Clock Input</div>
<div class="t i" style="left:392.2px;top:249.46px;width:69.3px;text-align:center;color:#cbcbcb;font-size:6.6px">Click to export</div>
<div class="t b" style="left:462.6px;top:249.16000000000003px;width:34px;overflow:hidden;color:#282828;font-size:6.15px">unconnected</div>
<div class="t " style="left:244.2px;top:257.305px;color:#3e3646;">reset</div>
<div class="t " style="left:300.3px;top:257.305px;color:#4a4250;">Reset Input</div>
<div class="t i" style="left:392.2px;top:256.90500000000003px;width:69.3px;text-align:center;color:#cbcbcb;font-size:6.6px">Click to export</div>
<div class="t " style="left:462.8px;top:257.305px;color:#4a3e56;">[clk]</div>
<div class="t " style="left:244.2px;top:264.75000000000006px;color:#3e3646;">s1</div>
<div class="t " style="left:300.3px;top:264.75000000000006px;color:#4a4250;">Avalon Memory Mapped Slave</div>
<div class="t i" style="left:392.2px;top:264.3500000000001px;width:69.3px;text-align:center;color:#cbcbcb;font-size:6.6px">Click to export</div>
<div class="t " style="left:462.8px;top:264.75000000000006px;color:#4a3e56;">[clk]</div>
<svg class="a" style="left:498.5px;top:264.45000000000005px" width="5" height="5"><path d="M0.8 2.8 l1 1.2 l2.2 -2.8" stroke="#a0a0a0" stroke-width="0.6" fill="none"/></svg>
<svg class="a" style="left:128.8px;top:270.89500000000004px" width="7" height="7"><defs><linearGradient id="cb31" x1="0" y1="0" x2="1" y2="1"><stop offset="0" stop-color="#d4e2f2"/><stop offset="0.5" stop-color="#f8fbff"/><stop offset="1" stop-color="#c4d6ec"/></linearGradient></defs><rect x="0.5" y="0.5" width="6" height="6" rx="0.8" fill="url(#cb31)" stroke="#90a6c2" stroke-width="0.8"/><path d="M1.8 3.8 L2.9 5 L5.2 2.1" stroke="#1a1a1a" stroke-width="1.1" fill="none"/></svg>
<svg class="a" style="left:231.5px;top:271.095px" width="7" height="7"><rect x="1" y="1" width="4.6" height="4.6" rx="0.6" fill="#f0f0f0" stroke="#585858" stroke-width="0.9"/><path d="M2.2 3.3 H4.4" stroke="#303030" stroke-width="0.8"/></svg>
<div class="t b" style="left:239.7px;top:271.595px;color:#241c2c;font-size:6.15px">sdram_0</div>
<div class="t " style="left:300.3px;top:272.19500000000005px;color:#4a4250;">SDRAM Controller</div>
<div class="t " style="left:244.2px;top:279.64000000000004px;color:#3e3646;">clk</div>
<div class="t " style="left:300.3px;top:279.64000000000004px;color:#4a4250;">Clock Input</div>
<div class="t i" style="left:392.2px;top:279.24000000000007px;width:69.3px;text-align:center;color:#cbcbcb;font-size:6.6px">Click to export</div>
<div class="t b" style="left:462.6px;top:278.94000000000005px;width:34px;overflow:hidden;color:#282828;font-size:6.15px">unconnected</div>
<div class="t " style="left:244.2px;top:287.08500000000004px;color:#3e3646;">reset</div>
<div class="t " style="left:300.3px;top:287.08500000000004px;color:#4a4250;">Reset Input</div>
<div class="t i" style="left:392.2px;top:286.68500000000006px;width:69.3px;text-align:center;color:#cbcbcb;font-size:6.6px">Click to export</div>
<div class="t " style="left:462.8px;top:287.08500000000004px;color:#4a3e56;">[clk]</div>
<div class="t " style="left:244.2px;top:294.53000000000003px;color:#3e3646;">s1</div>
<div class="t " style="left:300.3px;top:294.53000000000003px;color:#4a4250;">Avalon Memory Mapped Slave</div>
<div class="t i" style="left:392.2px;top:294.13000000000005px;width:69.3px;text-align:center;color:#cbcbcb;font-size:6.6px">Click to export</div>
<div class="t " style="left:462.8px;top:294.53000000000003px;color:#4a3e56;">[clk]</div>
<svg class="a" style="left:498.5px;top:294.23px" width="5" height="5"><path d="M0.8 2.8 l1 1.2 l2.2 -2.8" stroke="#a0a0a0" stroke-width="0.6" fill="none"/></svg>
<div class="t " style="left:244.2px;top:301.975px;color:#3e3646;">wire</div>
<div class="t " style="left:300.3px;top:301.975px;color:#4a4250;">Conduit</div>
<div class="t i" style="left:392.2px;top:301.57500000000005px;width:69.3px;text-align:center;color:#cbcbcb;font-size:6.6px">Click to export</div>
<svg class="a" style="left:128.8px;top:308.12px" width="7" height="7"><defs><linearGradient id="cb36" x1="0" y1="0" x2="1" y2="1"><stop offset="0" stop-color="#d4e2f2"/><stop offset="0.5" stop-color="#f8fbff"/><stop offset="1" stop-color="#c4d6ec"/></linearGradient></defs><rect x="0.5" y="0.5" width="6" height="6" rx="0.8" fill="url(#cb36)" stroke="#90a6c2" stroke-width="0.8"/><path d="M1.8 3.8 L2.9 5 L5.2 2.1" stroke="#1a1a1a" stroke-width="1.1" fill="none"/></svg>
<svg class="a" style="left:231.5px;top:308.32px" width="7" height="7"><rect x="1" y="1" width="4.6" height="4.6" rx="0.6" fill="#f0f0f0" stroke="#585858" stroke-width="0.9"/><path d="M2.2 3.3 H4.4" stroke="#303030" stroke-width="0.8"/></svg>
<div class="t b" style="left:239.7px;top:308.82px;color:#241c2c;font-size:6.15px">video_0</div>
<div class="t " style="left:300.3px;top:309.42px;color:#4a4250;">video</div>
<div class="t " style="left:244.2px;top:316.86500000000007px;color:#3e3646;">sys_reset</div>
<div class="t " style="left:300.3px;top:316.86500000000007px;color:#4a4250;">Reset Input</div>
<div class="t b" style="left:393.0px;top:315.9650000000001px;color:#181818;font-size:6.35px">reset_0</div>
<div class="t " style="left:244.2px;top:324.31000000000006px;color:#3e3646;">sys_clk</div>
<div class="t " style="left:300.3px;top:324.31000000000006px;color:#4a4250;">Clock Input</div>
<div class="t b" style="left:393.0px;top:323.4100000000001px;color:#181818;font-size:6.35px">clk_0</div>
<div class="t b i" style="left:462.8px;top:323.71000000000004px;color:#202020;font-size:6.1px">exported</div>
<div class="t " style="left:244.2px;top:331.75500000000005px;color:#3e3646;">video_out</div>
<div class="t " style="left:300.3px;top:331.75500000000005px;color:#4a4250;">Conduit</div>
<div class="t i" style="left:392.2px;top:331.3550000000001px;width:69.3px;text-align:center;color:#cbcbcb;font-size:6.6px">Click to export</div>
<div class="t " style="left:244.2px;top:339.20000000000005px;color:#3e3646;">vid_clk</div>
<div class="t " style="left:300.3px;top:339.20000000000005px;color:#4a4250;">Clock Input</div>
<div class="t b" style="left:393.0px;top:338.30000000000007px;color:#181818;font-size:6.35px">clk_1</div>
<div class="t b i" style="left:462.8px;top:338.6px;color:#202020;font-size:6.1px">exported</div>
<div class="t " style="left:244.2px;top:346.64500000000004px;color:#3e3646;">vid_reset</div>
<div class="t " style="left:300.3px;top:346.64500000000004px;color:#4a4250;">Reset Input</div>
<div class="t b" style="left:393.0px;top:345.74500000000006px;color:#181818;font-size:6.35px">reset_1</div>
<div class="t " style="left:244.2px;top:354.09000000000003px;color:#3e3646;">sgdma_descriptor...</div>
<div class="t " style="left:300.3px;top:354.09000000000003px;color:#4a4250;">Avalon Memory Mapped Slave</div>
<div class="t i" style="left:392.2px;top:353.69000000000005px;width:69.3px;text-align:center;color:#cbcbcb;font-size:6.6px">Click to export</div>
<div class="t " style="left:462.8px;top:354.09000000000003px;color:#4a3e56;">[sys_clk]</div>
<svg class="a" style="left:498.5px;top:353.79px" width="5" height="5"><path d="M0.8 2.8 l1 1.2 l2.2 -2.8" stroke="#a0a0a0" stroke-width="0.6" fill="none"/></svg>
<div class="t " style="left:244.2px;top:361.535px;color:#3e3646;">framebuffer_read</div>
<div class="t " style="left:300.3px;top:361.535px;color:#4a4250;">Avalon Memory Mapped Master</div>
<div class="t i" style="left:392.2px;top:361.13500000000005px;width:69.3px;text-align:center;color:#cbcbcb;font-size:6.6px">Click to export</div>
<div class="t " style="left:462.8px;top:361.535px;color:#4a3e56;">[sys_clk]</div>
<div class="t " style="left:244.2px;top:368.9800000000001px;color:#3e3646;">sgdma_slave</div>
<div class="t " style="left:300.3px;top:368.9800000000001px;color:#4a4250;">Avalon Memory Mapped Slave</div>
<div class="t i" style="left:392.2px;top:368.5800000000001px;width:69.3px;text-align:center;color:#cbcbcb;font-size:6.6px">Click to export</div>
<div class="t " style="left:462.8px;top:368.9800000000001px;color:#4a3e56;">[sys_clk]</div>
<svg class="a" style="left:498.5px;top:368.68000000000006px" width="5" height="5"><path d="M0.8 2.8 l1 1.2 l2.2 -2.8" stroke="#a0a0a0" stroke-width="0.6" fill="none"/></svg>
<svg class="a" style="left:128.8px;top:375.12500000000006px" width="7" height="7"><defs><linearGradient id="cb45" x1="0" y1="0" x2="1" y2="1"><stop offset="0" stop-color="#d4e2f2"/><stop offset="0.5" stop-color="#f8fbff"/><stop offset="1" stop-color="#c4d6ec"/></linearGradient></defs><rect x="0.5" y="0.5" width="6" height="6" rx="0.8" fill="url(#cb45)" stroke="#90a6c2" stroke-width="0.8"/><path d="M1.8 3.8 L2.9 5 L5.2 2.1" stroke="#1a1a1a" stroke-width="1.1" fill="none"/></svg>
<svg class="a" style="left:231.5px;top:375.32500000000005px" width="7" height="7"><rect x="1" y="1" width="4.6" height="4.6" rx="0.6" fill="#f0f0f0" stroke="#585858" stroke-width="0.9"/><path d="M2.2 3.3 H4.4" stroke="#303030" stroke-width="0.8"/></svg>
<div class="t b" style="left:239.7px;top:375.82500000000005px;color:#241c2c;font-size:6.15px">touchpad_0</div>
<div class="t " style="left:300.3px;top:376.42500000000007px;color:#4a4250;">touchpad</div>
<div class="t " style="left:244.2px;top:383.87000000000006px;color:#3e3646;">clk</div>
<div class="t " style="left:300.3px;top:383.87000000000006px;color:#4a4250;">Clock Input</div>
<div class="t b" style="left:393.0px;top:382.9700000000001px;color:#181818;font-size:6.35px">clk_2</div>
<div class="t b i" style="left:462.8px;top:383.27000000000004px;color:#202020;font-size:6.1px">exported</div>
<div class="t " style="left:244.2px;top:391.31500000000005px;color:#3e3646;">reset</div>
<div class="t " style="left:300.3px;top:391.31500000000005px;color:#4a4250;">Reset Input</div>
<div class="t b" style="left:393.0px;top:390.4150000000001px;color:#181818;font-size:6.35px">reset_2</div>
<div class="t " style="left:244.2px;top:398.76000000000005px;color:#3e3646;">pen_irq_n_external</div>
<div class="t " style="left:300.3px;top:398.76000000000005px;color:#4a4250;">Conduit Endpoint</div>
<div class="t i" style="left:392.2px;top:398.36000000000007px;width:69.3px;text-align:center;color:#cbcbcb;font-size:6.6px">Click to export</div>
<div class="t " style="left:244.2px;top:406.20500000000004px;color:#3e3646;">spi_external</div>
<div class="t " style="left:300.3px;top:406.20500000000004px;color:#4a4250;">Conduit Endpoint</div>
<div class="t i" style="left:392.2px;top:405.80500000000006px;width:69.3px;text-align:center;color:#cbcbcb;font-size:6.6px">Click to export</div>
<div class="t " style="left:244.2px;top:413.65000000000003px;color:#3e3646;">spi_control_port</div>
<div class="t " style="left:300.3px;top:413.65000000000003px;color:#4a4250;">Avalon Memory Mapped Slave</div>
<div class="t i" style="left:392.2px;top:413.25000000000006px;width:69.3px;text-align:center;color:#cbcbcb;font-size:6.6px">Click to export</div>
<div class="t " style="left:462.8px;top:413.65000000000003px;color:#4a3e56;">[clk]</div>
<svg class="a" style="left:498.5px;top:413.35px" width="5" height="5"><path d="M0.8 2.8 l1 1.2 l2.2 -2.8" stroke="#a0a0a0" stroke-width="0.6" fill="none"/></svg>
<div class="t " style="left:244.2px;top:421.095px;color:#3e3646;">pen_irq_n_s1</div>
<div class="t " style="left:300.3px;top:421.095px;color:#4a4250;">Avalon Memory Mapped Slave</div>
<div class="t i" style="left:392.2px;top:420.69500000000005px;width:69.3px;text-align:center;color:#cbcbcb;font-size:6.6px">Click to export</div>
<div class="t " style="left:462.8px;top:421.095px;color:#4a3e56;">[clk]</div>
<svg class="a" style="left:498.5px;top:420.795px" width="5" height="5"><path d="M0.8 2.8 l1 1.2 l2.2 -2.8" stroke="#a0a0a0" stroke-width="0.6" fill="none"/></svg>
<svg class="a" style="left:0;top:0" width="644" height="468"><g stroke="#787878" stroke-width="1.2" fill="none"><circle cx="224.1" cy="50.77" r="1.75" stroke-width="0.95"/><path d="M225.8 50.77 H229.5" stroke-width="0.95"/><circle cx="224.1" cy="58.21" r="1.75" stroke-width="0.95"/><path d="M225.8 58.21 H229.5" stroke-width="0.95"/><path d="M143.50 65.66 H227.4"/><path d="M229.2 63.86 A1.9 1.9 0 0 0 229.2 67.46" stroke-width="0.8"/><circle cx="144.00" cy="65.66" r="0.8" fill="#606060" stroke="none"/><path d="M151.00 73.10 H227.4"/><path d="M229.2 71.30 A1.9 1.9 0 0 0 229.2 74.90" stroke-width="0.8"/><circle cx="151.50" cy="73.10" r="0.8" fill="#606060" stroke="none"/><path d="M222.5 87.99 H227"/><path d="M229 87.99 l-2.6 -1.5 v3z" fill="#606060" stroke="none"/><path d="M222.5 95.44 H227"/><path d="M229 95.44 l-2.6 -1.5 v3z" fill="#606060" stroke="none"/><path d="M222.5 102.88 H227"/><path d="M229 102.88 l-2.6 -1.5 v3z" fill="#606060" stroke="none"/><path d="M159.00 110.33 H227.4"/><path d="M229.2 108.53 A1.9 1.9 0 0 0 229.2 112.13" stroke-width="0.8"/><circle cx="159.50" cy="110.33" r="0.8" fill="#606060" stroke="none"/><path d="M166.70 117.77 H227.4"/><path d="M229.2 115.97 A1.9 1.9 0 0 0 229.2 119.57" stroke-width="0.8"/><circle cx="167.20" cy="117.77" r="0.8" fill="#606060" stroke="none"/><path d="M174.40 125.22 H227.4"/><path d="M229.2 123.42 A1.9 1.9 0 0 0 229.2 127.02" stroke-width="0.8"/><circle cx="174.90" cy="125.22" r="0.8" fill="#606060" stroke="none"/><path d="M222.8 132.66 H229.5"/><path d="M222.8 140.11 H229.5"/><path d="M222.8 147.55 H229.5"/><path d="M222.5 162.44 H227"/><path d="M229 162.44 l-2.6 -1.5 v3z" fill="#606060" stroke="none"/><path d="M222.5 169.89 H227"/><path d="M229 169.89 l-2.6 -1.5 v3z" fill="#606060" stroke="none"/><path d="M227 177.33 H184.5 a3 3 0 0 0 -3 3 V196.67 a3 3 0 0 0 3 3 H227"/><path d="M227 184.78 H192 a3 3 0 0 0 -3 3 V196.67 a3 3 0 0 0 3 3"/><path d="M229.2 175.53 A1.9 1.9 0 0 0 229.2 179.13" stroke-width="0.8"/><path d="M229.2 182.98 A1.9 1.9 0 0 0 229.2 186.58" stroke-width="0.8"/><path d="M229 199.67 l-2.6 -1.5 v3z" fill="#606060" stroke="none"/><path d="M196.20 192.22 H227.4"/><path d="M229.2 190.42 A1.9 1.9 0 0 0 229.2 194.02" stroke-width="0.8"/><circle cx="196.70" cy="192.22" r="0.8" fill="#606060" stroke="none"/><path d="M203.60 207.11 H227.4"/><path d="M229.2 205.31 A1.9 1.9 0 0 0 229.2 208.91" stroke-width="0.8"/><circle cx="204.10" cy="207.11" r="0.8" fill="#606060" stroke="none"/><path d="M222.5 222.00 H227"/><path d="M229 222.00 l-2.6 -1.5 v3z" fill="#606060" stroke="none"/><path d="M222.5 229.45 H227"/><path d="M229 229.45 l-2.6 -1.5 v3z" fill="#606060" stroke="none"/><path d="M222.5 236.89 H227"/><path d="M229 236.89 l-2.6 -1.5 v3z" fill="#606060" stroke="none"/><path d="M222.5 251.78 H227"/><path d="M229 251.78 l-2.6 -1.5 v3z" fill="#606060" stroke="none"/><path d="M222.5 259.23 H227"/><path d="M229 259.23 l-2.6 -1.5 v3z" fill="#606060" stroke="none"/><path d="M222.5 266.67 H227"/><path d="M229 266.67 l-2.6 -1.5 v3z" fill="#606060" stroke="none"/><path d="M222.5 281.56 H227"/><path d="M229 281.56 l-2.6 -1.5 v3z" fill="#606060" stroke="none"/><path d="M222.5 289.01 H227"/><path d="M229 289.01 l-2.6 -1.5 v3z" fill="#606060" stroke="none"/><path d="M222.5 296.45 H227"/><path d="M229 296.45 l-2.6 -1.5 v3z" fill="#606060" stroke="none"/><path d="M222.8 303.90 H229.5"/><circle cx="224.1" cy="318.79" r="1.75" stroke-width="0.95"/><path d="M225.8 318.79 H229.5" stroke-width="0.95"/><circle cx="224.1" cy="326.23" r="1.75" stroke-width="0.95"/><path d="M225.8 326.23 H229.5" stroke-width="0.95"/><path d="M222.8 333.68 H229.5"/><circle cx="224.1" cy="341.12" r="1.75" stroke-width="0.95"/><path d="M225.8 341.12 H229.5" stroke-width="0.95"/><circle cx="224.1" cy="348.57" r="1.75" stroke-width="0.95"/><path d="M225.8 348.57 H229.5" stroke-width="0.95"/><path d="M222.5 356.01 H227"/><path d="M229 356.01 l-2.6 -1.5 v3z" fill="#606060" stroke="none"/><path d="M210.40 363.46 H227.4"/><path d="M229.2 361.66 A1.9 1.9 0 0 0 229.2 365.26" stroke-width="0.8"/><circle cx="210.90" cy="363.46" r="0.8" fill="#606060" stroke="none"/><path d="M222.5 370.90 H227"/><path d="M229 370.90 l-2.6 -1.5 v3z" fill="#606060" stroke="none"/><circle cx="224.1" cy="385.79" r="1.75" stroke-width="0.95"/><path d="M225.8 385.79 H229.5" stroke-width="0.95"/><circle cx="224.1" cy="393.24" r="1.75" stroke-width="0.95"/><path d="M225.8 393.24 H229.5" stroke-width="0.95"/><path d="M222.8 400.68 H229.5"/><path d="M222.8 408.13 H229.5"/><path d="M222.5 415.57 H227"/><path d="M229 415.57 l-2.6 -1.5 v3z" fill="#606060" stroke="none"/><path d="M222.5 423.02 H227"/><path d="M229 423.02 l-2.6 -1.5 v3z" fill="#606060" stroke="none"/></g></svg>
<div class="a" style="left:2px;top:430.7px;width:640px;height:3px;background:#f8f8f8"></div>
<div class="a" style="left:2px;top:433.7px;width:640px;height:1.9px;background:#cccccc"></div>
<div class="a" style="left:2px;top:435.6px;width:640px;height:9px;background:#ececec"></div>
<div class="a" style="left:3.7px;top:436.2px;width:36px;height:8.6px;background:linear-gradient(#e4eefa,#d2e0f2);border:1px solid #b0c6e0;border-bottom:none;border-top-left-radius:3px"></div>
<div class="t b" style="left:7.8px;top:438.2px;font-size:5.6px;color:#404050">Messages</div>
<div class="a" style="left:2px;top:443.8px;width:640px;height:3px;background:#bcd0e8"></div>
<div class="a" style="left:3px;top:446.7px;width:638px;height:6px;background:#ececec;border-bottom:1px solid #c4c4c4"></div>
<div class="t" style="left:3px;top:447.9px;width:377.5px;text-align:center;font-size:5.3px;letter-spacing:0.28px;color:#4a3a48">Description</div>
<div class="a" style="left:380px;top:446.7px;width:1px;height:6px;background:#c8c8c8"></div>
<div class="t" style="left:381px;top:447.9px;width:256px;text-align:center;font-size:5.3px;letter-spacing:0.28px;color:#4a3a48">Path</div>
<div class="a" style="left:3px;top:452.7px;width:638px;height:5.3px;background:#ffffff"></div>
<svg class="a" style="left:0;top:450px" width="60" height="10"><circle cx="7.5" cy="8" r="1.3" fill="#5080c8"/><circle cx="15.8" cy="8.2" r="3" fill="#e02020"/><circle cx="15.8" cy="8.2" r="1.6" fill="#ffffff"/></svg>
<div class="a" style="left:2px;top:435.6px;width:1.8px;height:30px;background:#c4d6ec"></div>
<div class="t m b" style="left:22px;top:455px;font-size:5.8px;color:#303048;transform:scaleX(0.8);transform-origin:0 0">10 Errors</div>
<div class="a" style="left:640px;top:435.6px;width:2px;height:30px;background:#d4e0ee"></div>
<div class="a" style="left:2px;top:464.6px;width:640px;height:1.4px;background:#d4e0ee"></div>
<div class="a" style="left:632.8px;top:446.3px;width:7px;height:11.4px;background:#dde4ee;border:0.6px solid #b8c4d4"></div>
<svg class="a" style="left:632px;top:446px" width="9" height="12"><circle cx="3.9" cy="3.4" r="2.4" fill="#e8b020"/><circle cx="3.9" cy="3.4" r="1.2" fill="#f8e0a0"/><path d="M5 4.6 L7.2 6.6" stroke="#202020" stroke-width="1.1"/><path d="M2.2 8.5 h3.6 v2.4 h-3.6z M2.2 8.5 l3.6 2.4 M5.8 8.5 l-3.6 2.4" stroke="#909090" stroke-width="0.5" fill="none"/></svg>
<div class="a" style="left:3.8px;top:458px;width:636.2px;height:6.6px;background:#f2b4b4"></div>
<div class="t m b" style="left:7px;top:459.2px;font-size:5.8px;color:#402828;transform:scaleX(0.8);transform-origin:0 0">10 Errors, 18 Warnings</div>
</body></html>
